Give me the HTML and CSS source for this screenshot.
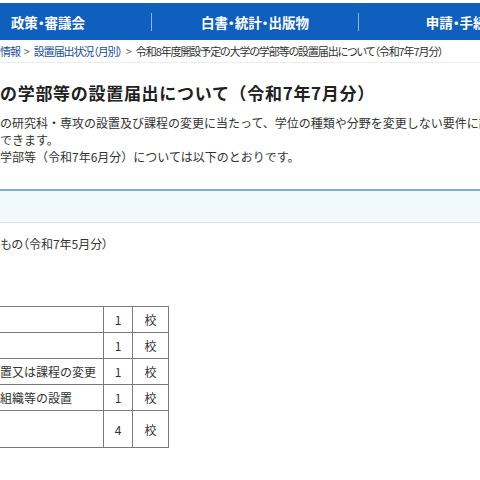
FILE: index.html
```html
<!DOCTYPE html>
<html lang="ja">
<head>
  <meta charset="UTF-8">
  <meta name="viewport" content="width=device-width, initial-scale=1.0">
  <title>令和8年度開設予定の大学の学部等の設置届出について（令和7年7月分）</title>
  <link rel="stylesheet" href="styles.css">
</head>
<body>
  <nav class="gnav">
    <a class="gnav-item" href="#">政策・審議会</a>
    <a class="gnav-item" href="#">白書・統計・出版物</a>
    <a class="gnav-item" href="#">申請・手続き</a>
  </nav>

  <div class="topicpath">
    <a href="#">情報</a><span class="sep">&gt;</span><a href="#">設置届出状況（月別）</a><span class="sep">&gt;</span><span class="current">令和8年度開設予定の大学の学部等の設置届出について（令和7年7月分）</span>
  </div>

  <div class="content">
    <h1 class="title">の学部等の設置届出について（令和7年7月分）</h1>
    <p class="lead">の研究科・専攻の設置及び課程の変更に当たって、学位の種類や分野を変更しない要件に該当する場合には<br>できます。</p>
    <p class="lead">学部等（令和7年6月分）については以下のとおりです。</p>

    <div class="notice"></div>

    <p class="period">もの（令和7年5月分）</p>

    <table class="count-table">
      <tr><td class="kind"></td><td class="num">1</td><td class="unit">校</td></tr>
      <tr><td class="kind"></td><td class="num">1</td><td class="unit">校</td></tr>
      <tr><td class="kind">置又は課程の変更</td><td class="num">1</td><td class="unit">校</td></tr>
      <tr><td class="kind">組織等の設置</td><td class="num">1</td><td class="unit">校</td></tr>
      <tr class="total"><td class="kind"></td><td class="num">4</td><td class="unit">校</td></tr>
    </table>
  </div>
</body>
</html>
```

FILE: styles.css
```css
body {
  margin: 0;
  overflow: hidden;
  font-family: "Noto Sans CJK JP", sans-serif;
  color: #333;
  background-color: #fff;
}

a {
  text-decoration: none;
}

/* global navigation */
.gnav {
  display: flex;
  align-items: center;
  height: 37px;
  margin-top: 3px;
  margin-left: -55px;
  background-color: #0f5fbf;
}

.gnav-item {
  flex: none;
  width: 206px;
  height: 18px;
  line-height: 18px;
  text-align: center;
  color: #fff;
  font-size: 13.5px;
  font-weight: bold;
  font-feature-settings: "palt";
}

.gnav-item + .gnav-item {
  border-left: 1px solid #8db3e2;
}

/* breadcrumb */
.topicpath {
  height: 20px;
  padding-top: 2px;
  line-height: 18px;
  font-size: 11px;
  letter-spacing: -1.1px;
  font-feature-settings: "palt";
  white-space: nowrap;
  border-bottom: 1px solid #ececec;
}

.topicpath a {
  color: #1a4ea0;
}

.topicpath .sep {
  margin: 0 5px 0 4px;
  color: #666;
}

.topicpath .current {
  color: #333;
}

.content {
  padding-top: 18px;
}

.title {
  margin: 0 0 9px;
  font-size: 17px;
  line-height: 24px;
  font-weight: bold;
  letter-spacing: 0.7px;
  color: #222;
  white-space: nowrap;
}

.lead {
  margin: 0;
  font-size: 12px;
  line-height: 17px;
  white-space: nowrap;
}

.notice {
  height: 31px;
  margin-top: 24px;
  border-top: 2px solid #7cb2c9;
  border-bottom: 1px solid #d6e3ea;
  background-color: #f1f9fc;
}

.period {
  margin: 12px 0 0;
  font-size: 12px;
  line-height: 17px;
  font-feature-settings: "palt";
}

.count-table {
  margin-top: 54px;
  border-collapse: collapse;
  font-size: 12px;
}

.count-table td {
  height: 25px;
  padding: 0;
  border: 1px solid #7a7a7a;
}

.count-table .total td {
  height: 36px;
}

.count-table .kind {
  width: 103px;
  border-left: none;
  white-space: nowrap;
}

.count-table .num {
  width: 28px;
  text-align: center;
}

.count-table .unit {
  width: 35px;
  text-align: center;
}
```
